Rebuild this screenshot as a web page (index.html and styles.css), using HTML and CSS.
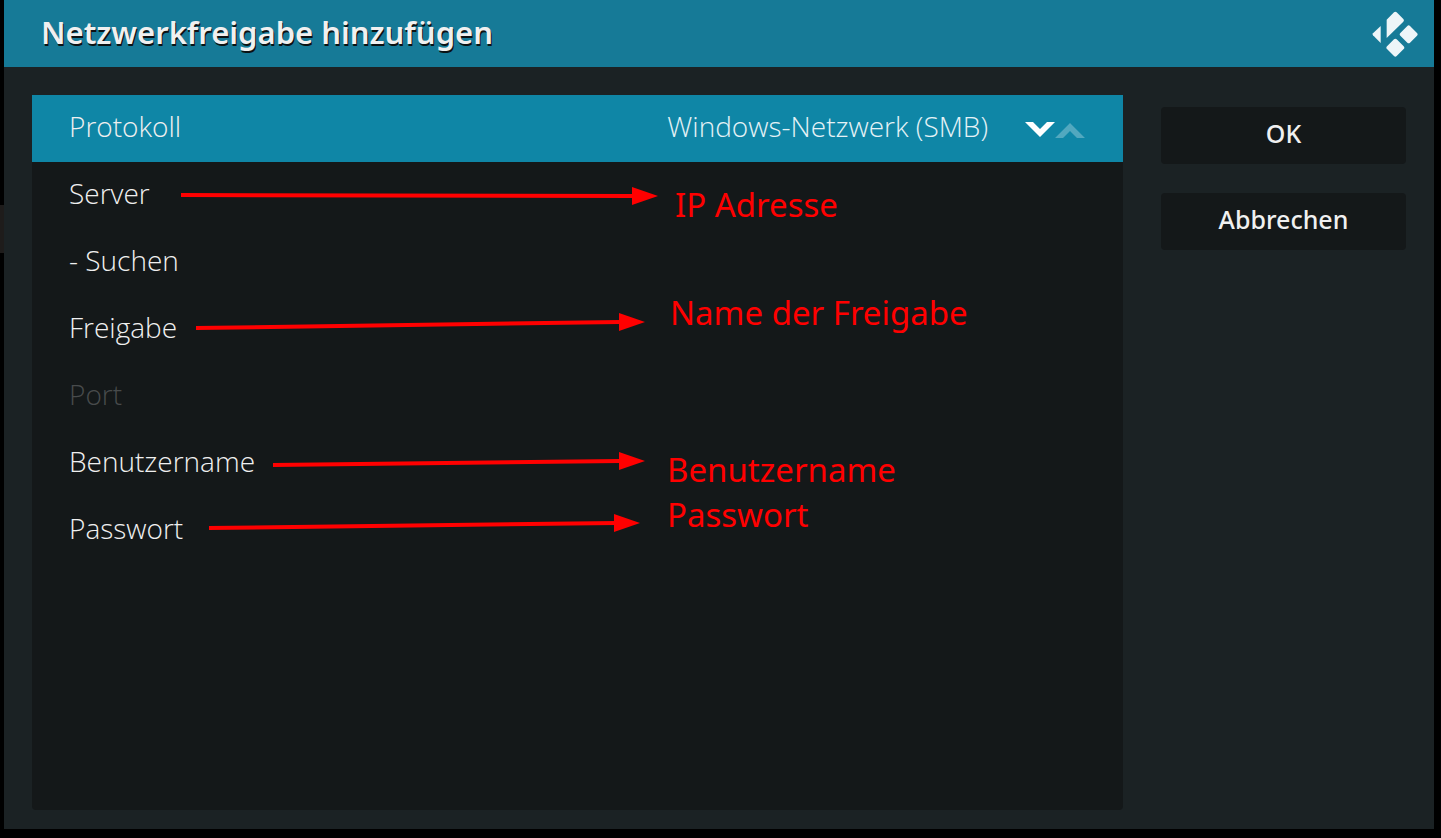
FILE: index.html
```html
<!DOCTYPE html>
<html lang="de">
<head>
  <meta charset="UTF-8" />
  <meta name="viewport" content="width=device-width, initial-scale=1" />
  <title>Netzwerkfreigabe hinzufügen</title>
  <link rel="stylesheet" href="styles.css">
</head>
<body>

  <form class="dialog">
    <header class="header">
      <h1>Netzwerkfreigabe hinzufügen</h1>
      <svg class="logo" viewBox="0 0 138 138" aria-hidden="true">
        <path d="M44 26 L66 4 Q70 0 74 4 L94 24 Q98 28 94 32 L44 81 Z" />
        <path d="M26 45 V96 L3 73 Q0 70 3 67 Z" />
        <path d="M106 45 Q110 41 114 45 L135 66 Q139 70 135 74 L114 95 Q110 99 106 95 L85 74 Q81 70 85 66 Z" />
        <path d="M66 85 Q70 81 74 85 L95 106 Q99 110 95 114 L74 135 Q70 139 66 135 L45 114 Q41 110 45 106 Z" />
      </svg>
    </header>

    <div class="content">
      <div class="settings">
        <div class="row active">
          <label for="protocol">Protokoll</label>
          <select id="protocol">
            <option>Windows-Netzwerk (SMB)</option>
          </select>
          <div class="spinner">
            <button type="button" aria-label="Weiter">
              <svg viewBox="0 0 30 16"><path d="M0 0 H8 L15 7 L22 0 H30 L15 15 Z" /></svg>
            </button>
            <button type="button" aria-label="Zurück" disabled>
              <svg viewBox="0 0 30 16"><path d="M0 16 H8 L15 9 L22 16 H30 L15 1 Z" /></svg>
            </button>
          </div>
        </div>
        <div class="row">
          <label for="server">Server</label>
          <input type="text" id="server">
        </div>
        <button type="button" class="row">- Suchen</button>
        <div class="row">
          <label for="share">Freigabe</label>
          <input type="text" id="share">
        </div>
        <div class="row disabled">
          <label for="port">Port</label>
          <input type="text" id="port" disabled>
        </div>
        <div class="row">
          <label for="user">Benutzername</label>
          <input type="text" id="user" autocomplete="off">
        </div>
        <div class="row">
          <label for="password">Passwort</label>
          <input type="password" id="password" autocomplete="off">
        </div>

        <!-- red notes over the list -->
        <svg class="notes" width="1092" height="715">
          <g class="lines">
            <path d="M149 100 L602 101" />
            <path d="M164 233 L588 227" />
            <path d="M241 370 L588 366" />
            <path d="M177 433 L584 428" />
          </g>
          <path d="M600 92 L626 101 L600 110 Z" />
          <path d="M587 218 L613 227 L587 236 Z" />
          <path d="M587 357 L613 366 L587 375 Z" />
          <path d="M582 419 L608 428 L582 437 Z" />
          <text x="643" y="122">IP Adresse</text>
          <text x="638" y="230">Name der Freigabe</text>
          <text x="635" y="387">Benutzername</text>
          <text x="635" y="432">Passwort</text>
        </svg>
      </div>

      <div class="actions">
        <button type="submit">OK</button>
        <button type="button">Abbrechen</button>
      </div>
    </div>
  </form>

</body>
</html>
```

FILE: styles.css
```css
* {
  box-sizing: border-box;
}
body {
  margin: 0;
  padding: 0 7px 9px 4px;
  background: #000;
  font-family: "Noto Sans", "Open Sans", sans-serif;
  color: #f0f0f0;
}
/* edge of the window behind the dialog */
body::before {
  content: "";
  position: absolute;
  left: 0;
  top: 205px;
  width: 4px;
  height: 48px;
  background: #1e1c1b;
}
button, input, select {
  font: inherit;
  color: inherit;
  background: none;
  border: 0;
  padding: 0;
  margin: 0;
}
.dialog {
  display: flex;
  flex-direction: column;
  min-height: calc(100vh - 9px);
  background: #1b2224;
}
.header {
  display: flex;
  align-items: center;
  justify-content: space-between;
  height: 67px;
  padding: 0 16px 0 37px;
  background: #167a97;
}
h1 {
  margin: 0;
  padding-bottom: 4px;
  font-size: 31px;
  line-height: 60px;
  font-weight: 600;
  text-shadow: 1px 2px 0 #0b1214;
}
.logo {
  width: 46px;
  height: 46px;
  fill: #edf5f8;
}
.content {
  display: flex;
  flex: 1;
  gap: 38px;
  padding: 28px 28px 19px;
}
.settings {
  position: relative;
  flex: 1;
  min-width: 0;
  background: #141819;
  border-radius: 4px;
  font-family: "Open Sans", "Noto Sans", sans-serif;
  font-size: 28px;
  font-weight: 300;
}
.row {
  display: flex;
  align-items: center;
  width: 100%;
  height: 67px;
  padding: 0 38px 5px 37px;
  text-align: left;
}
.row input {
  flex: 1;
  min-width: 0;
  height: 40px;
  margin-left: 24px;
  text-align: right;
}
.row select {
  flex: 1;
  min-width: 0;
  appearance: none;
  text-align: right;
  text-align-last: right;
  color: #e4f2f6;
}
.active {
  background: #0f86a6;
}
.disabled {
  color: #484b4c;
}
.spinner {
  display: flex;
  margin-left: 37px;
  padding-top: 8px;
}
.spinner svg {
  display: block;
  width: 30px;
  height: 16px;
  fill: #fff;
}
.spinner button:disabled {
  opacity: 0.28;
}
.notes {
  position: absolute;
  left: 0;
  top: 0;
  pointer-events: none;
  fill: #f00;
  font-family: "Noto Sans", sans-serif;
  font-size: 33px;
  font-weight: 400;
}
.lines {
  stroke: #f00;
  stroke-width: 4;
}
.actions {
  display: flex;
  flex-direction: column;
  gap: 29px;
  width: 245px;
  padding-top: 12px;
}
.actions button {
  height: 57px;
  padding-bottom: 5px;
  background: #141819;
  border-radius: 4px;
  font-size: 25px;
  font-weight: 500;
}
```
